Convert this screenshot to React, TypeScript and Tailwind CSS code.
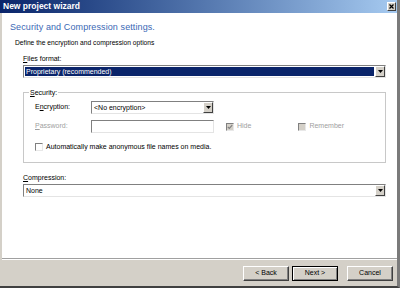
import React from 'react';

// Win2000-style wizard page: Security and Compression settings

const font = { fontFamily: '"Liberation Sans", Arial, sans-serif' };

function Arrow() {
  return (
    <div className="h-full w-[10px] shrink-0 bg-[#d4d0c8] border border-t-white border-l-white border-r-[#404040] border-b-[#404040] flex items-center justify-center">
      <svg width="5" height="3" viewBox="0 0 5 3">
        <path d="M0 0h5L2.5 3z" fill="#000" />
      </svg>
    </div>
  );
}

function Combo({ text, selected, className }: { text: string; selected?: boolean; className?: string }) {
  return (
    <div
      className={`h-[13px] flex items-stretch border border-t-[#808080] border-l-[#808080] border-r-[#e4e4e4] border-b-[#e4e4e4] bg-white ${className ?? ''}`}
    >
      <div className="flex-1 flex items-center p-px">
        <span
          className={`h-full flex-1 flex items-center pl-px text-[7px] leading-none ${
            selected ? 'bg-[#0a246a] text-white' : 'text-black'
          }`}
        >
          {text}
        </span>
      </div>
      <Arrow />
    </div>
  );
}

function Check({ checked, disabled }: { checked?: boolean; disabled?: boolean }) {
  return (
    <div
      className={`w-[8px] h-[8px] shrink-0 border border-t-[#808080] border-l-[#808080] border-r-[#e8e8e8] border-b-[#e8e8e8] flex items-center justify-center ${
        disabled ? 'bg-[#d4d0c8]' : 'bg-white'
      }`}
    >
      {checked && (
        <svg width="6" height="6" viewBox="0 0 6 6">
          <path d="M0.8 2.8L2.3 4.3L5.2 1.2" stroke="#808080" strokeWidth="1.2" fill="none" />
        </svg>
      )}
    </div>
  );
}

function Btn({ label, primary }: { label: string; primary?: boolean }) {
  return (
    <div
      className={`w-[46px] h-[15px] bg-[#d4d0c8] flex items-center justify-center text-[7px] text-black ${
        primary
          ? 'border border-black shadow-[inset_1px_1px_0_#fff,inset_-1px_-1px_0_#808080]'
          : 'border border-t-white border-l-white border-r-[#404040] border-b-[#404040] shadow-[inset_-1px_-1px_0_#808080]'
      }`}
    >
      {label}
    </div>
  );
}

export default function App() {
  return (
    <div
      className="w-[400px] h-[288px] flex flex-col bg-[#d4d0c8] border-r-[3px] border-r-[#7a7a7a] border-b-2 border-b-[#404040]"
      style={font}
    >
      {/* Title bar */}
      <div className="h-[13px] shrink-0 flex items-center justify-between bg-gradient-to-r from-[#0a246a] to-[#a6caf0] pl-[3px] pr-[1px]">
        <span className="text-[8.5px] font-bold text-white leading-none">New project wizard</span>
        <div className="w-[9px] h-[9px] bg-[#d4d0c8] border border-t-white border-l-white border-r-[#404040] border-b-[#404040] flex items-center justify-center">
          <svg width="5" height="5" viewBox="0 0 5 5">
            <path d="M0.5 0.5L4.5 4.5M4.5 0.5L0.5 4.5" stroke="#000" strokeWidth="1.2" />
          </svg>
        </div>
      </div>

      {/* Page body */}
      <div className="flex-1 ml-[2px] bg-white flex flex-col">
        <div className="pl-[8px] pt-[8px] text-[9px] leading-[12px] text-[#3a68b5] tracking-[0.1px]">
          Security and Compression settings.
        </div>
        <div className="pl-[13px] mt-[5px] text-[6.7px] leading-[9px] text-black">
          Define the encryption and compression options
        </div>

        <div className="ml-[21px] w-[363px] flex flex-col">
          <div className="mt-[7px] text-[7px] leading-[9px] text-black">
            <span className="underline">F</span>iles format:
          </div>
          <Combo className="mt-[2px]" text="Proprietary (recommended)" selected />

          <fieldset className="mt-[10px] h-[75px] border border-[#c8c8c8] px-[11px]">
            <legend className="ml-[-6px] px-[1px] text-[7px] leading-[9px] text-black">
              <span className="underline">S</span>ecurity:
            </legend>
            <div className="mt-[4px] flex items-center">
              <span className="w-[56px] text-[7px] text-black">
                E<span className="underline">n</span>cryption:
              </span>
              <Combo className="w-[123px]" text="<No encryption>" />
            </div>
            <div className="mt-[6px] flex items-center">
              <span className="w-[56px] text-[7px] text-[#a0a0a0]">
                <span className="underline">P</span>assword:
              </span>
              <div className="w-[123px] h-[13px] bg-white border border-t-[#808080] border-l-[#808080] border-r-[#e4e4e4] border-b-[#e4e4e4]" />
              <div className="ml-[12px] flex items-center gap-[3px]">
                <Check checked disabled />
                <span className="text-[7px] text-[#a0a0a0]">Hide</span>
              </div>
              <div className="ml-[47px] flex items-center gap-[3px]">
                <Check disabled />
                <span className="text-[7px] text-[#a0a0a0]">Remember</span>
              </div>
            </div>
            <div className="mt-[9px] flex items-center gap-[3px]">
              <Check />
              <span className="text-[7px] text-black">Automatically make anonymous file names on media.</span>
            </div>
          </fieldset>

          <div className="mt-[10px] text-[7px] leading-[9px] text-black">
            <span className="underline">C</span>ompression:
          </div>
          <Combo className="mt-[2px]" text="None" />
        </div>
      </div>

      {/* Footer */}
      <div className="h-[28px] shrink-0 ml-[2px] border-t border-t-[#a0a0a0] shadow-[inset_0_1px_0_#fff] flex items-start justify-end pt-[7px] pr-[4px]">
        <Btn label="< Back" />
        <div className="ml-[3px]">
          <Btn label="Next >" primary />
        </div>
        <div className="ml-[9px]">
          <Btn label="Cancel" />
        </div>
      </div>
    </div>
  );
}
